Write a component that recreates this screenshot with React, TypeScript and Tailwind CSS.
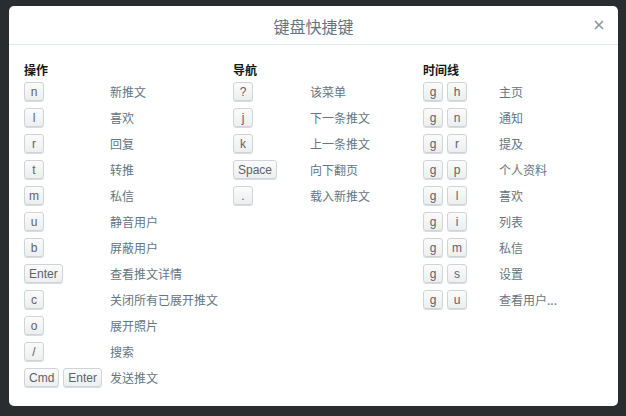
const actions: [string[], string][] = [
  [['n'], '新推文'],
  [['l'], '喜欢'],
  [['r'], '回复'],
  [['t'], '转推'],
  [['m'], '私信'],
  [['u'], '静音用户'],
  [['b'], '屏蔽用户'],
  [['Enter'], '查看推文详情'],
  [['c'], '关闭所有已展开推文'],
  [['o'], '展开照片'],
  [['/'], '搜索'],
  [['Cmd', 'Enter'], '发送推文'],
];

const navigation: [string[], string][] = [
  [['?'], '该菜单'],
  [['j'], '下一条推文'],
  [['k'], '上一条推文'],
  [['Space'], '向下翻页'],
  [['.'], '载入新推文'],
];

const timeline: [string[], string][] = [
  [['g', 'h'], '主页'],
  [['g', 'n'], '通知'],
  [['g', 'r'], '提及'],
  [['g', 'p'], '个人资料'],
  [['g', 'l'], '喜欢'],
  [['g', 'i'], '列表'],
  [['g', 'm'], '私信'],
  [['g', 's'], '设置'],
  [['g', 'u'], '查看用户...'],
];

function Key({ k }: { k: string }) {
  return (
    <kbd className="inline-flex h-[19px] min-w-[20px] items-center justify-center rounded-[3px] border border-[#d0d4d8] bg-gradient-to-b from-[#fbfbfb] to-[#eceeef] px-[4px] font-['Liberation_Sans',sans-serif] text-[12px] leading-none text-[#5f6368] shadow-[0_1px_0_#d9dcdf]">
      {k}
    </kbd>
  );
}

function Section({
  title,
  rows,
  keyWidth,
  width,
}: {
  title: string;
  rows: [string[], string][];
  keyWidth: string;
  width: string;
}) {
  return (
    <div className={width}>
      <h3 className="mb-[4px] h-[16px] text-[12px] font-bold leading-[16px] text-[#14171a]">{title}</h3>
      <div className="flex flex-col gap-[7px]">
        {rows.map(([keys, label]) => (
          <div key={label + keys.join()} className="flex h-[19px] items-center">
            <div className={`flex shrink-0 gap-[4px] ${keyWidth}`}>
              {keys.map((k) => (
                <Key key={k} k={k} />
              ))}
            </div>
            <span className="text-[12px] leading-none whitespace-nowrap text-[#66757f]">{label}</span>
          </div>
        ))}
      </div>
    </div>
  );
}

export default function App() {
  return (
    <div className="h-[416px] w-[626px] overflow-hidden bg-[#2a2d30] pt-[6px] pl-[9px] font-['Noto_Sans_CJK_SC','Liberation_Sans',sans-serif]">
      <div className="h-[400px] w-[609px] rounded-[5px] bg-white">
        {/* Header */}
        <div className="relative flex h-[39px] items-center justify-center border-b border-[#e1e8ed] pt-[2px]">
          <h2 className="text-[16px] leading-none text-[#66757f]">键盘快捷键</h2>
          <button className="absolute top-[14px] right-[14px] text-[#8899a6]">
            <svg width="10" height="10" viewBox="0 0 10 10" fill="none" stroke="currentColor" strokeWidth="1.7">
              <path d="M1 1l8 8M9 1l-8 8" />
            </svg>
          </button>
        </div>

        {/* Body */}
        <div className="flex pt-[17px] pl-[15px]">
          <Section title="操作" rows={actions} keyWidth="w-[86px]" width="w-[209px]" />
          <Section title="导航" rows={navigation} keyWidth="w-[77px]" width="w-[190px]" />
          <Section title="时间线" rows={timeline} keyWidth="w-[76px]" width="w-[180px]" />
        </div>
      </div>
    </div>
  );
}
